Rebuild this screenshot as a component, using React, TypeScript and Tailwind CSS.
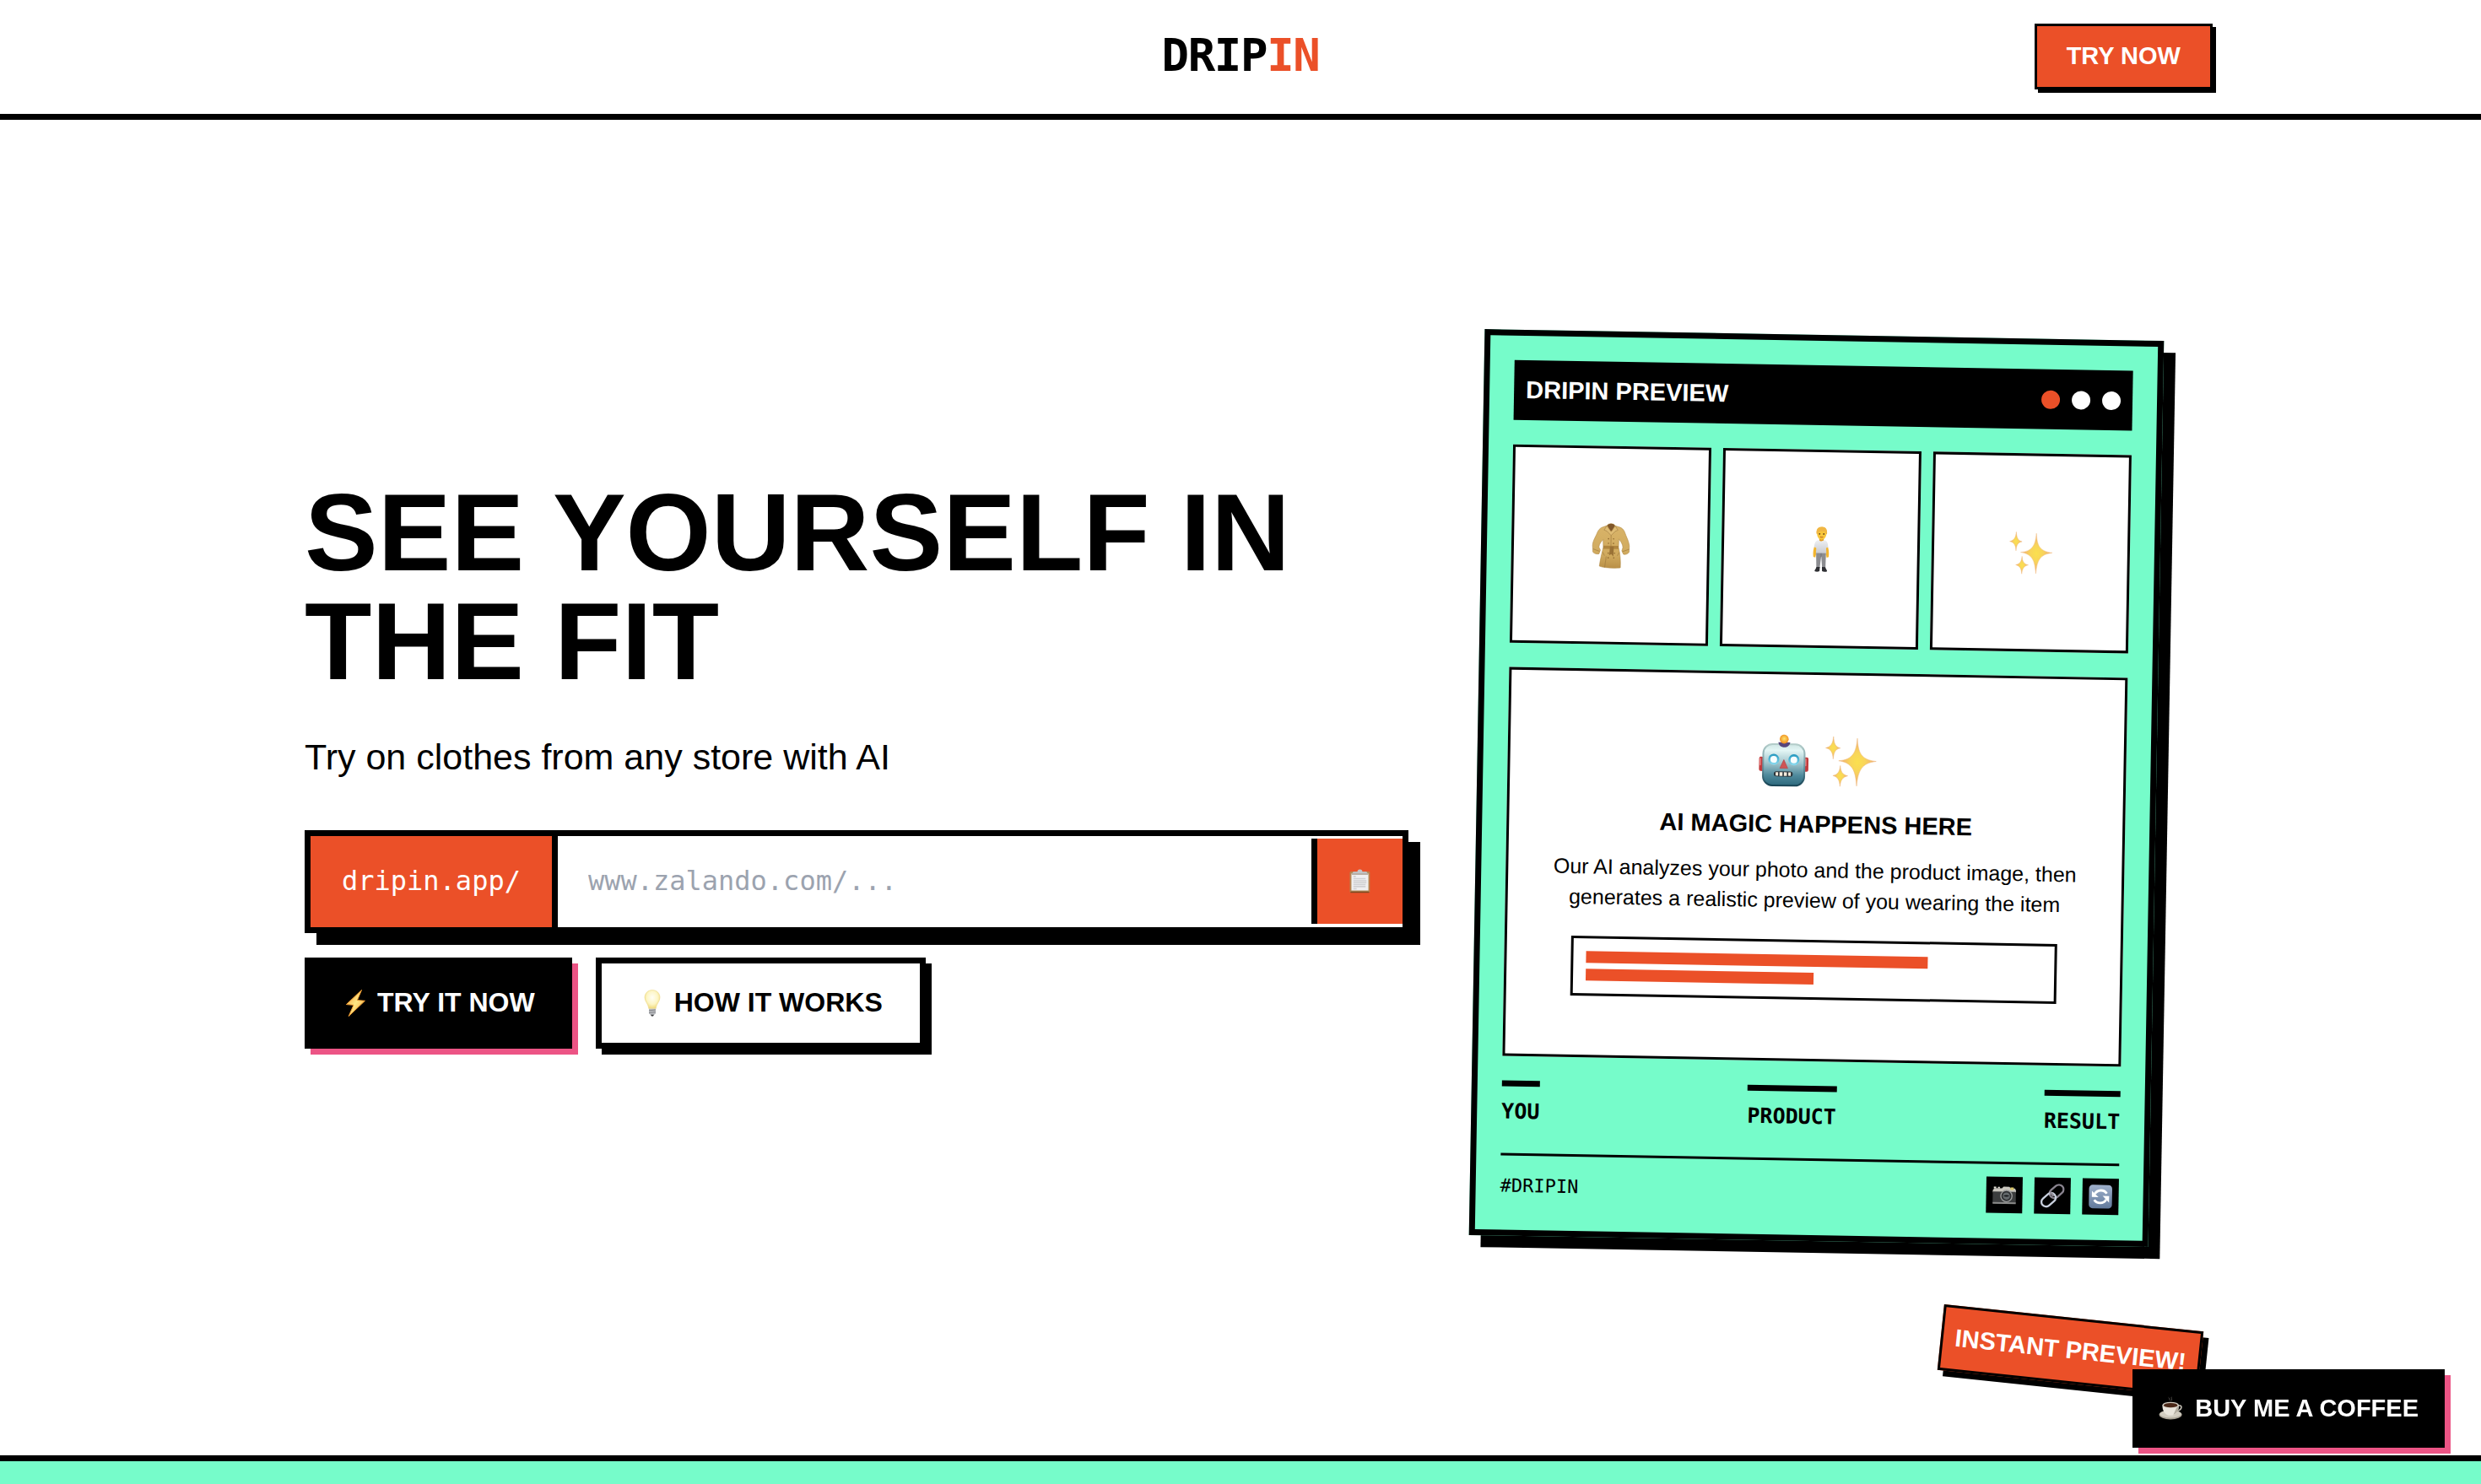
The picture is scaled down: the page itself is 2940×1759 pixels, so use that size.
import type { ReactNode } from "react";

type IconProps = { className?: string };

const STAR_PATHS = [
  "M39 4.3 C40.2 21 43.5 29.6 61.7 31.3 C44.6 33.6 40.6 42 39 61 C37.4 42 33.4 33.6 17.3 31.3 C34 29.6 37.8 21 39 4.3Z",
  "M10.7 2.7 C11.4 10.6 12.8 15 19 16.3 C12.8 17.6 11.4 21.6 10.7 29.3 C10 21.6 8 17.6 1.7 16.3 C8 15 10 10.6 10.7 2.7Z",
  "M19.3 37 C20 44 21.8 47.6 28.3 49 C21.8 50.6 20 54.6 19.3 61.7 C18.6 54.6 16.8 50.6 10.7 49 C16.8 47.6 18.6 44 19.3 37Z",
];

function Sparkles({ className }: IconProps) {
  return (
    <svg viewBox="0 0 64 64" className={className} aria-hidden="true">
      <defs>
        <radialGradient id="spark" cx="0.5" cy="0.5" r="0.5">
          <stop offset="0" stopColor="#fbe04e" />
          <stop offset="0.4" stopColor="#f8d55a" />
          <stop offset="1" stopColor="#f0a878" />
        </radialGradient>
      </defs>
      {STAR_PATHS.map((d) => (
        <path key={d} d={d} fill="url(#spark)" stroke="#f0b97c" strokeWidth="0.5" />
      ))}
    </svg>
  );
}

function Robot({ className }: IconProps) {
  return (
    <svg viewBox="0 0 64 64" className={className} aria-hidden="true">
      <defs>
        <linearGradient id="robotHead" x1="0" y1="0" x2="0" y2="1">
          <stop offset="0" stopColor="#cfe6e4" />
          <stop offset="0.15" stopColor="#e3f6f5" />
          <stop offset="0.45" stopColor="#a3c6cd" />
          <stop offset="0.75" stopColor="#4f8a9c" />
          <stop offset="1" stopColor="#2c687c" />
        </linearGradient>
        <linearGradient id="robotEdge" x1="0" y1="0" x2="0" y2="1">
          <stop offset="0" stopColor="#b4cdca" />
          <stop offset="0.6" stopColor="#5d8b98" />
          <stop offset="1" stopColor="#184556" />
        </linearGradient>
        <radialGradient id="robotBulb" cx="0.5" cy="0.45" r="0.55">
          <stop offset="0" stopColor="#ffe36b" />
          <stop offset="1" stopColor="#ee8a1c" />
        </radialGradient>
        <linearGradient id="robotEye" x1="0" y1="0" x2="0" y2="1">
          <stop offset="0" stopColor="#2196bd" />
          <stop offset="1" stopColor="#8edcf0" />
        </linearGradient>
      </defs>
      <rect x="3" y="28" width="6" height="17" rx="2" fill="#c23a3c" />
      <rect x="55.5" y="28" width="6" height="17" rx="2" fill="#c23a3c" />
      <rect x="3.6" y="29.5" width="1.6" height="9" rx="0.8" fill="#e88080" />
      <rect x="57.5" y="29.5" width="1.6" height="9" rx="0.8" fill="#e88080" />
      <rect x="7.8" y="12.8" width="49" height="49" rx="11" fill="url(#robotHead)" stroke="url(#robotEdge)" strokeWidth="2" />
      <path d="M25.5 10.5 H39.5 C39 14.5 36 16.4 32.5 16.4 C29 16.4 26 14.5 25.5 10.5Z" fill="#57467c" />
      <circle cx="32.3" cy="6.8" r="5.3" fill="url(#robotBulb)" />
      <circle cx="20.3" cy="30.9" r="6.6" fill="url(#robotEye)" />
      <circle cx="20.3" cy="31" r="4" fill="#f7feff" />
      <circle cx="44.2" cy="31.1" r="6.6" fill="url(#robotEye)" />
      <circle cx="44.2" cy="31.2" r="4" fill="#f7feff" />
      <path d="M32.3 31.2 L37 41.3 H27.8Z" fill="#cf5455" stroke="#b8494c" strokeWidth="0.8" strokeLinejoin="round" />
      <rect x="20.7" y="45" width="22.4" height="6.2" rx="3" fill="#2a3238" />
      <path d="M22.8 46 h3 v4.2 h-3z M27.4 46 h3.6 v4.4 h-3.6z M32.6 46 h3.6 v4.4 h-3.6z M37.8 46 h3 v4.2 h-3z" fill="#f4ebdc" />
    </svg>
  );
}

function Coat({ className }: IconProps) {
  return (
    <svg viewBox="0 0 54 54" className={className} aria-hidden="true">
      <defs>
        <linearGradient id="coatFill" x1="0" y1="0" x2="0" y2="1">
          <stop offset="0" stopColor="#d9b469" />
          <stop offset="0.7" stopColor="#d0aa5e" />
          <stop offset="1" stopColor="#ba9047" />
        </linearGradient>
      </defs>
      <path d="M17 5.2 C12 7 11 11 9.5 14.5 C7.5 19 5.5 22 5.2 27 L5.8 35 C7.5 37 10.5 37.6 13 37 L14.6 32.5 L12.8 29 C13 25 15.5 22.5 17.6 20 L18 29 C16.5 36 14.5 44 13.7 51.5 C20 54 32 54 38.6 53 C39 45 38 36 36 29 L36.3 19 C38.5 22 41 25 41.2 29 L40 33 L42 37 C44.5 37.6 47 36.6 48.6 34.5 L48.8 27 C48 22 46.5 19 44.5 14.5 C43 10.5 42 7 37.5 5.2 L31.5 3.4 C30 0.2 23.5 0.2 22 3.4Z" fill="url(#coatFill)" stroke="#b28a45" strokeWidth="0.6" />
      <path d="M22.3 3.4 C24 0.4 29.5 0.4 31.3 3.4 L28 9.8 H26Z" fill="#80572a" />
      <path d="M21.8 3.6 L18.6 8.6 L22 10 L27 15 L31.8 10 L35 8.6 L31.6 3.6 L27 10.5Z" fill="#dfbc74" stroke="#a17d42" strokeWidth="0.6" />
      <path d="M18 27.2 H36 V31 H18Z" fill="#b0863f" />
      <path d="M26 28 L30.5 28 L30 40 L27.5 37 L25 38.5Z" fill="#9a7236" />
      <path d="M27 15 V28 M6 31.3 L13.6 34 M48.6 31 L41 33.8 M21.6 40 L20 53 M17.5 35 l2 4 M36.8 35 l-2 4" stroke="#9f7a3e" strokeWidth="0.7" fill="none" />
      <g fill="#8f682f">
        <circle cx="24" cy="19" r="0.8" />
        <circle cx="30" cy="19" r="0.8" />
        <circle cx="24" cy="24.4" r="0.8" />
        <circle cx="30" cy="24.4" r="0.8" />
        <circle cx="24" cy="36" r="0.8" />
        <circle cx="31.4" cy="36" r="0.8" />
        <circle cx="24" cy="41.5" r="0.8" />
        <circle cx="30.6" cy="41.5" r="0.8" />
      </g>
    </svg>
  );
}

function Person({ className }: IconProps) {
  return (
    <svg viewBox="0 0 54 54" className={className} aria-hidden="true">
      <defs>
        <linearGradient id="shirt" x1="0" y1="0" x2="0" y2="1">
          <stop offset="0" stopColor="#eef0f3" />
          <stop offset="1" stopColor="#c9cbd1" />
        </linearGradient>
      </defs>
      <path d="M19.5 22 C18 27 17.4 30 18 36 L20.4 36.8 L22.5 27Z M34.5 22 C36 27 36.8 30 36.2 36 L33.8 36.8 L31.8 27Z" fill="#f2b52f" />
      <path d="M21.2 30 H33 L32.6 49 H28.6 L27.4 35 L25.8 49 H21.8Z" fill="#8b8c90" />
      <path d="M27.2 31 V36" stroke="#6d6e72" strokeWidth="0.8" />
      <path d="M22 48 H26 L25.6 53 C23.5 54 21 53.8 19.8 53 C19.8 51 21.5 50.4 22 48Z M28.4 48 H32.4 C33 50.4 34.6 51 34.6 53 C33 53.8 30.5 54 28.6 53Z" fill="#2e2f33" />
      <path d="M24.8 14 H30 V19 H24.8Z" fill="#e39a20" />
      <path d="M24.4 16 C21 16.6 19.3 18.4 18.8 24.5 L21.4 25.4 L21 31.6 H33.4 L33 25.4 L35.4 24.5 C35 18.4 33.4 16.6 30.2 16 C28.6 18 26 18 24.4 16Z" fill="url(#shirt)" />
      <path d="M21.8 6 C21.5 1.8 24 0.4 27.5 0.6 C32 0.4 33.8 3 33.2 7.6 C33.2 12.4 30.6 15.6 27.5 15.6 C24 15.6 21.6 12 21.8 6Z" fill="#f8c63c" />
      <path d="M21.2 8.6 C20.6 3 23.6 0.2 27.6 0.4 C31.6 0 34.4 3 33.8 8.6 L32.8 9 C32.4 6.8 31.6 5.4 29 5.6 C26 5.8 23.6 5 22.6 9Z" fill="#f0b644" />
      <circle cx="25" cy="8.8" r="0.9" fill="#5b3a16" />
      <circle cx="30" cy="8.8" r="0.9" fill="#5b3a16" />
      <path d="M25.8 12.2 Q27.5 13.4 29.2 12.2" stroke="#c0661c" strokeWidth="1" fill="none" />
    </svg>
  );
}

function Bolt({ className }: IconProps) {
  return (
    <svg viewBox="0 0 32 32" className={className} aria-hidden="true">
      <defs>
        <linearGradient id="boltFill" x1="0" y1="0" x2="1" y2="1">
          <stop offset="0" stopColor="#f08f2c" />
          <stop offset="0.5" stopColor="#fee884" />
          <stop offset="1" stopColor="#ee8f2b" />
        </linearGradient>
      </defs>
      <path d="M23.5 0.5 L5.4 17.6 L14 18.3 L8.2 31.5 L27.4 13.3 L18.4 12.6Z" fill="url(#boltFill)" stroke="#ee9a30" strokeWidth="1" strokeLinejoin="round" />
    </svg>
  );
}

function Bulb({ className }: IconProps) {
  return (
    <svg viewBox="0 0 32 32" className={className} aria-hidden="true">
      <defs>
        <radialGradient id="bulbFill" cx="0.5" cy="0.4" r="0.6">
          <stop offset="0" stopColor="#fffef4" />
          <stop offset="0.6" stopColor="#fdf6c6" />
          <stop offset="1" stopColor="#f0d979" />
        </radialGradient>
      </defs>
      <path d="M16 0.6 C21.5 0.6 25 4.6 25 9.4 C25 14 20.6 17 20.2 22.6 H11.8 C11.4 17 7 14 7 9.4 C7 4.6 10.5 0.6 16 0.6Z" fill="url(#bulbFill)" stroke="#ecd88a" strokeWidth="0.6" />
      <path d="M12 22.8 H20 V28.4 L18 30 H14 L12 28.4Z" fill="#b9bbbf" />
      <path d="M12 24.8 L20 24 M12 27.4 L20 26.6" stroke="#77797d" strokeWidth="0.8" />
      <path d="M14 29.8 H18 L17 31.6 H15Z" fill="#3b3c3e" />
    </svg>
  );
}

function Clipboard({ className }: IconProps) {
  return (
    <svg viewBox="0 0 30 30" className={className} aria-hidden="true">
      <rect x="2.6" y="3" width="24.6" height="26" rx="1.6" fill="#b58450" />
      <rect x="3.4" y="27.6" width="23" height="1.6" rx="0.6" fill="#7b4b24" />
      <path d="M4.6 5.6 H25.4 V26.4 H4.6Z" fill="#f0f0f1" />
      <path d="M7 3.4 H12 C12 1.6 13 0.6 15 0.6 C17 0.6 18 1.6 18 3.4 H23 L25 6 H5Z" fill="#c3c4c7" />
      <path d="M5 6.4 H25" stroke="#85705a" strokeWidth="0.8" />
      <path d="M7 9.2 H10 M7 12 H22 M7 14.4 H23 M7 16.8 H23 M7 19.2 H22 M7 21.6 H22 M7 24.4 H11" stroke="#cfd0d2" strokeWidth="1.6" />
    </svg>
  );
}

function Camera({ className }: IconProps) {
  return (
    <svg viewBox="0 0 30 30" className={className} aria-hidden="true">
      <path d="M2 5 H5 V7 H2Z M7 5 H9.4 V7 H7Z" fill="#e4e0d6" />
      <path d="M0.8 9 L3 6.8 H12 L14 4.8 H21 L23 6.8 H28 L29.2 9 V12 H0.8Z" fill="#c8c5bd" />
      <rect x="0.8" y="11" width="28.4" height="14.4" rx="1" fill="#3c3d3e" />
      <rect x="0.8" y="23.8" width="28.4" height="2" fill="#8b8b8a" />
      <rect x="22.4" y="5.6" width="4" height="3" fill="#d8c56a" />
      <circle cx="17.6" cy="16.2" r="7.6" fill="#9a9b9b" />
      <circle cx="17.6" cy="16.2" r="6.2" fill="#2d2f31" />
      <circle cx="17.6" cy="16.2" r="4.4" fill="#63686b" />
      <path d="M14 16.2 Q17.6 13.6 21.2 16.2 Q17.6 18 14 16.2Z" fill="#16181a" />
    </svg>
  );
}

function ChainLink({ className }: IconProps) {
  return (
    <svg viewBox="0 0 30 30" className={className} aria-hidden="true">
      <g fill="none" strokeWidth="2.4">
        <rect x="10.6" y="3.8" width="19" height="11.4" rx="5.7" transform="rotate(-42 20.1 9.5)" stroke="#8a8490" />
        <rect x="0.6" y="14.2" width="19.6" height="11.4" rx="5.7" transform="rotate(-42 10.4 19.9)" stroke="#c9d0de" />
        <path d="M11.6 11 C13.8 11.4 15.4 13 16 15.6" stroke="#928d99" />
      </g>
    </svg>
  );
}

function Refresh({ className }: IconProps) {
  return (
    <svg viewBox="0 0 30 30" className={className} aria-hidden="true">
      <defs>
        <linearGradient id="refreshFill" x1="0" y1="0" x2="0" y2="1">
          <stop offset="0" stopColor="#9fb0cb" />
          <stop offset="1" stopColor="#627a9c" />
        </linearGradient>
      </defs>
      <rect x="0.8" y="0.6" width="28.4" height="28.8" rx="4.6" fill="url(#refreshFill)" />
      <path d="M8 11.6 C11 6.4 19 5.6 22.6 11" fill="none" stroke="#fff" strokeWidth="3" />
      <path d="M22 18.4 C19 23.8 11 24.2 7.4 19" fill="none" stroke="#fff" strokeWidth="3" />
      <path d="M4.4 8 V15.6 H12.6Z" fill="#fff" />
      <path d="M25.6 22 V14 H17.6Z" fill="#fff" />
    </svg>
  );
}

function Coffee({ className }: IconProps) {
  return (
    <svg viewBox="0 0 30 30" className={className} aria-hidden="true">
      <path d="M12 1.4 C14 2.4 12.4 4 14.4 5.4 M16 0.8 C14.6 2.4 17 3.4 15.6 5.4" stroke="#55524f" strokeWidth="0.9" fill="none" />
      <ellipse cx="14.6" cy="22.6" rx="14" ry="5.8" fill="#aaa497" />
      <ellipse cx="14.6" cy="21.8" rx="13" ry="4.6" fill="#d2cdc1" />
      <path d="M24 11.6 C29 10 29.6 15.6 23.6 18" fill="none" stroke="#c5c0b5" strokeWidth="1.6" />
      <path d="M4.6 11 C4.6 18 8 23.6 14.6 23.6 C21 23.6 24.8 18 24.8 11Z" fill="#e9e5dc" />
      <path d="M18 22.8 C22 20.8 24.8 17 24.8 11 L22 14Z" fill="#b5afa2" />
      <ellipse cx="14.7" cy="10.8" rx="10.1" ry="3.8" fill="#d2cdc2" />
      <ellipse cx="14.7" cy="11" rx="8.6" ry="2.8" fill="#4a2717" />
    </svg>
  );
}

function PreviewTile({ children }: { children: ReactNode }) {
  return (
    <div className="flex aspect-square flex-1 items-center justify-center border-[3px] border-black bg-white">
      {children}
    </div>
  );
}

function ToolButton({ label, children }: { label: string; children: ReactNode }) {
  return (
    <button type="button" aria-label={label} className="flex size-[43px] items-center justify-center bg-black">
      {children}
    </button>
  );
}

const STEPS = ["YOU", "PRODUCT", "RESULT"];

export default function App() {
  return (
    <div className="flex min-h-screen flex-col bg-white font-['Liberation_Sans',Arial,sans-serif] text-[29px] leading-[43px] text-black">
      <header className="border-b-[7px] border-black pt-[28px] pb-[29px]">
        <div className="mx-auto grid w-full max-w-[2304px] grid-cols-[1fr_auto_1fr] items-center">
          <a
            href="#"
            className="col-start-2 pb-[4px] font-['DejaVu_Sans_Mono',monospace] text-[54px] leading-[65px] font-bold tracking-tight"
          >
            DRIP<span className="text-[#eb5028]">IN</span>
          </a>
          <button
            type="button"
            className="justify-self-end border-[3px] border-black bg-[#eb5028] px-[35px] pt-[14px] pb-[15px] font-bold text-white shadow-[4px_4px_0_0_#000]"
          >
            TRY NOW
          </button>
        </div>
      </header>

      <main className="flex min-h-[90vh] items-center">
        <div className="mx-auto grid w-full max-w-[2304px] grid-cols-5 items-center gap-[57px] px-[43px]">
          <section className="col-span-3 pb-[58px]">
            <h1 className="text-[130px] leading-[129px] font-bold">SEE YOURSELF IN THE FIT</h1>
            <p className="mt-[43px] text-[43px] leading-[58px]">Try on clothes from any store with AI</p>

            <form className="mt-[58px]" onSubmit={(e) => e.preventDefault()}>
              <div className="flex h-[122px] border-[7px] border-black bg-white font-['DejaVu_Sans_Mono',monospace] text-[32px] shadow-[14px_14px_0_0_#000]">
                <label
                  htmlFor="product-url"
                  className="flex items-center border-r-[7px] border-black bg-[#eb5028] px-[37px] text-white"
                >
                  dripin.app/
                </label>
                <input
                  id="product-url"
                  type="text"
                  placeholder="www.zalando.com/..."
                  className="min-w-0 flex-1 px-[36px] outline-none placeholder:text-[#9ca3af]"
                />
                <button
                  type="button"
                  aria-label="Paste"
                  className="flex h-[101px] w-[108px] items-center justify-center self-center border-l-[7px] border-black bg-[#eb5028]"
                >
                  <Clipboard className="size-[29px]" />
                </button>
              </div>

              <div className="mt-[29px] flex gap-[28px] text-[32px] font-bold">
                <button
                  type="submit"
                  className="flex h-[108px] items-center gap-[10px] bg-black px-[44px] text-white shadow-[7px_7px_0_0_#ec5485]"
                >
                  <Bolt className="size-[32px]" />
                  TRY IT NOW
                </button>
                <button
                  type="button"
                  className="flex h-[108px] items-center gap-[10px] border-[7px] border-black bg-white px-[44px] shadow-[7px_7px_0_0_#000]"
                >
                  <Bulb className="size-[32px]" />
                  HOW IT WORKS
                </button>
              </div>
            </form>
          </section>

          <section className="relative col-span-2 px-[24px]">
            <div className="rotate-1 border-[7px] border-black bg-[#76fcca] p-[29px] shadow-[14px_14px_0_0_#000]">
              <div className="flex items-center justify-between bg-black p-[14px] text-white">
                <h2 className="font-bold">DRIPIN PREVIEW</h2>
                <div className="flex gap-[14px]">
                  <span className="size-[22px] rounded-full bg-[#eb5028]" />
                  <span className="size-[22px] rounded-full bg-white" />
                  <span className="size-[22px] rounded-full bg-white" />
                </div>
              </div>

              <div className="mt-[29px] flex gap-[14px]">
                <PreviewTile>
                  <Coat className="size-[54px]" />
                </PreviewTile>
                <PreviewTile>
                  <Person className="size-[54px]" />
                </PreviewTile>
                <PreviewTile>
                  <Sparkles className="size-[54px]" />
                </PreviewTile>
              </div>

              <div className="mt-[29px] flex h-[461px] flex-col items-center justify-center border-[3px] border-black bg-white px-[29px] text-center">
                <div className="flex h-[72px] gap-[16px]">
                  <Robot className="size-[64px]" />
                  <Sparkles className="size-[64px]" />
                </div>
                <h3 className="mt-[14px] font-bold">AI MAGIC HAPPENS HERE</h3>
                <p className="mt-[14px] px-[14px] text-[25px] leading-[36px]">
                  Our AI analyzes your photo and the product image, then generates a realistic preview of you wearing
                  the item
                </p>
                <div className="mt-[29px] flex w-full max-w-[576px] flex-col gap-[7px] border-[3px] border-black bg-white p-[15px]">
                  <div className="h-[14px] w-3/4 bg-[#eb5028]" />
                  <div className="h-[14px] w-1/2 bg-[#eb5028]" />
                </div>
              </div>

              <div className="mt-[29px] flex justify-between font-['DejaVu_Sans_Mono',monospace] text-[25px] leading-[36px] font-bold">
                {STEPS.map((step) => (
                  <span key={step} className="border-t-[7px] border-black pt-[12px]">
                    {step}
                  </span>
                ))}
              </div>

              <div className="mt-[31px] flex items-center justify-between border-t-[3px] border-black pt-[14px]">
                <span className="pb-[2px] font-['DejaVu_Sans_Mono',monospace] text-[22px]">#DRIPIN</span>
                <div className="flex gap-[14px]">
                  <ToolButton label="Camera">
                    <Camera className="size-[29px]" />
                  </ToolButton>
                  <ToolButton label="Copy link">
                    <ChainLink className="size-[29px]" />
                  </ToolButton>
                  <ToolButton label="Refresh">
                    <Refresh className="size-[29px]" />
                  </ToolButton>
                </div>
              </div>
            </div>

            <div className="absolute right-[-29px] bottom-[-169px] rotate-6 border-[3px] border-black bg-[#eb5028] px-[14px] pt-[14px] pb-[15px] font-bold whitespace-nowrap text-white shadow-[7px_7px_0_0_#000]">
              INSTANT PREVIEW!
            </div>
          </section>
        </div>
      </main>

      <section className="flex-1 border-t-[7px] border-black bg-[#76fcca]" />

      <a
        href="#"
        className="fixed right-[43px] bottom-[43px] flex items-center gap-[14px] border-[3px] border-black bg-black px-[28px] pt-[22px] pb-[22px] font-bold text-white shadow-[7px_7px_0_0_#ec5485]"
      >
        <Coffee className="size-[29px]" />
        BUY ME A COFFEE
      </a>
    </div>
  );
}
